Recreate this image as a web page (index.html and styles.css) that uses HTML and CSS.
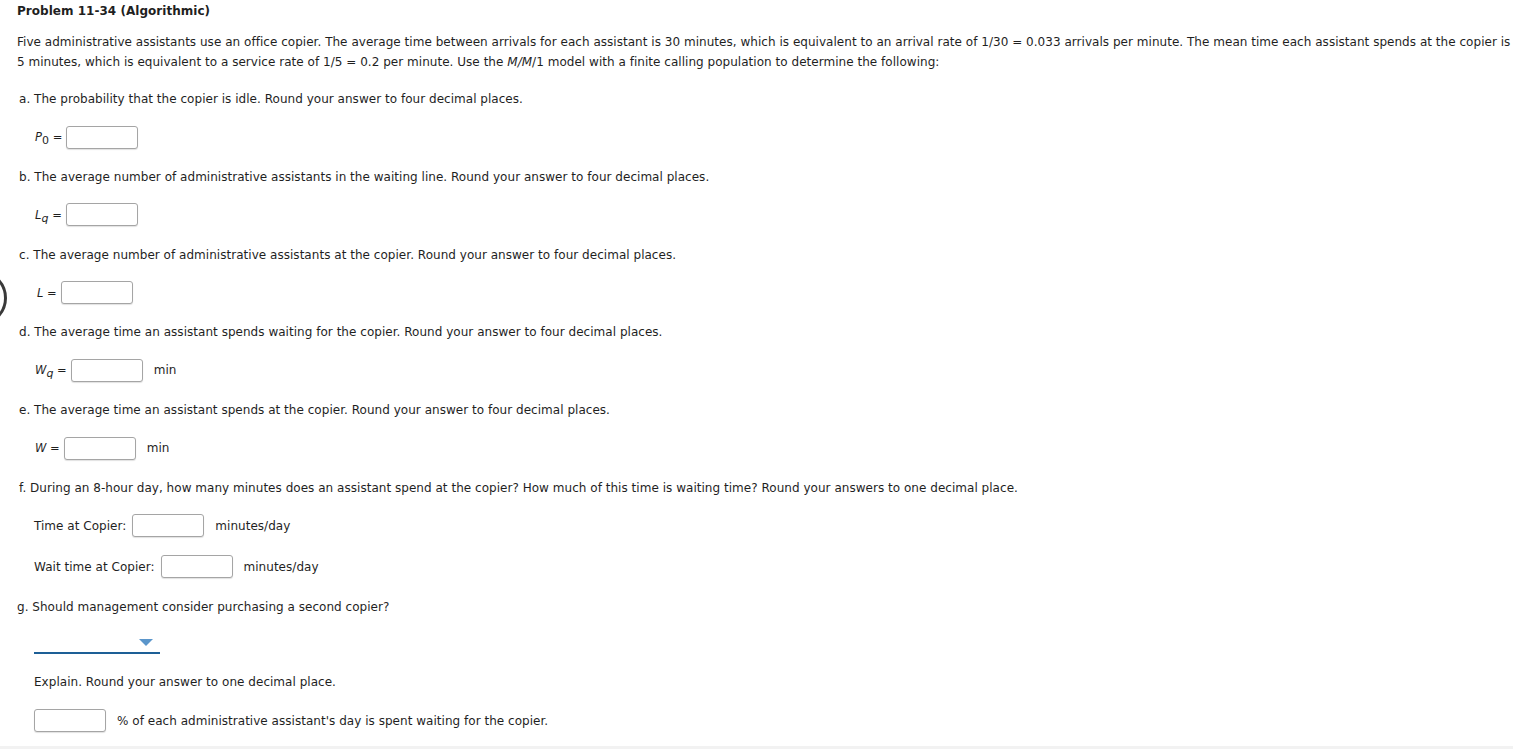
FILE: index.html
```html
<!DOCTYPE html>
<html>
<head>
<meta charset="utf-8">
<link rel="stylesheet" href="styles.css">
</head>
<body>
<div class="circle"></div>
<div class="page">
  <h1 class="title">Problem 11-34 (Algorithmic)</h1>
  <p class="intro">Five administrative assistants use an office copier. The average time between arrivals for each assistant is 30 minutes, which is equivalent to an arrival rate of 1/30 = 0.033 arrivals per minute. The mean time each assistant spends at the copier is 5 minutes, which is equivalent to a service rate of 1/5 = 0.2 per minute. Use the <span class="it">M/M</span>/1 model with a finite calling population to determine the following:</p>

  <div class="q">a. The probability that the copier is idle. Round your answer to four decimal places.</div>
  <div class="row"><span class="lbl"><i>P</i><sub>0</sub> =</span><input class="box" type="text"></div>

  <div class="q">b. The average number of administrative assistants in the waiting line. Round your answer to four decimal places.</div>
  <div class="row"><span class="lbl"><i>L</i><sub><i>q</i></sub> =</span><input class="box" type="text"></div>

  <div class="q">c. The average number of administrative assistants at the copier. Round your answer to four decimal places.</div>
  <div class="row"><span class="lbl lbl-l"><i>L</i> =</span><input class="box" type="text"></div>

  <div class="q">d. The average time an assistant spends waiting for the copier. Round your answer to four decimal places.</div>
  <div class="row"><span class="lbl"><i>W</i><sub><i>q</i></sub> =</span><input class="box" type="text"><span class="unit">min</span></div>

  <div class="q">e. The average time an assistant spends at the copier. Round your answer to four decimal places.</div>
  <div class="row"><span class="lbl"><i>W</i> =</span><input class="box" type="text"><span class="unit">min</span></div>

  <div class="q">f. During an 8-hour day, how many minutes does an assistant spend at the copier? How much of this time is waiting time? Round your answers to one decimal place.</div>
  <div class="row row-text"><span class="txt">Time at Copier:</span><input class="box" type="text"><span class="unit">minutes/day</span></div>
  <div class="row row-text row-tight"><span class="txt">Wait time at Copier:</span><input class="box" type="text"><span class="unit">minutes/day</span></div>

  <div class="q q-g">g. Should management consider purchasing a second copier?</div>
  <div class="select"><span class="arrow"></span></div>
  <div class="q q-sub">Explain. Round your answer to one decimal place.</div>
  <div class="row row-last"><input class="box" type="text"><span class="unit">% of each administrative assistant's day is spent waiting for the copier.</span></div>
</div>
<div class="footer"></div>
</body>
</html>
```

FILE: styles.css
```css
html, body {
  margin: 0;
  padding: 0;
  background: #fff;
}
body {
  font-family: "DejaVu Sans", Verdana, sans-serif;
  font-size: 12px;
  letter-spacing: 0.03px;
  color: #1f1f1f;
  position: relative;
  height: 749px;
  overflow: hidden;
}
.page {
  padding: 0 0 0 17px;
}
.title {
  margin: 0;
  font-size: 12px;
  font-weight: bold;
  line-height: 20px;
  padding-top: 1px;
}
.intro {
  margin: 11px 0 0 0;
  line-height: 20px;
}
.it {
  font-style: italic;
}
.q {
  margin: 17px 0 0 2px;
  line-height: 20px;
}
.row + .q {
  margin-top: 18.8px;
}
.row {
  display: flex;
  align-items: center;
  height: 22px;
  margin-top: 17px;
  padding-left: 16px;
}
.lbl {
  font-size: 11.5px;
  margin-right: 4px;
  padding-left: 2px;
  white-space: nowrap;
}
.lbl-l {
  padding-left: 4px;
}
.lbl sub {
  font-size: 11px;
  vertical-align: -3px;
  line-height: 0;
}
.box {
  box-sizing: border-box;
  width: 72px;
  height: 23px;
  border: 1px solid #a5a5a5;
  border-radius: 3px;
  background: #fff;
  box-shadow: 0 1px 1px rgba(0,0,0,0.12);
  padding: 0;
  margin: 0;
  flex: none;
}
.unit {
  margin-left: 11px;
}
.row-text {
  padding-left: 17px;
}
.txt {
  margin-right: 6px;
}
.row-tight {
  margin-top: 19px;
}
.q-g {
  margin-left: 0;
  margin-top: 18px;
}
.select {
  position: relative;
  margin: 17px 0 0 17px;
  width: 126px;
  height: 20px;
  box-sizing: border-box;
  border-bottom: 2px solid #1d5f96;
}
.arrow {
  position: absolute;
  right: 7px;
  top: 5px;
  width: 0;
  height: 0;
  border-left: 7px solid transparent;
  border-right: 7px solid transparent;
  border-top: 7px solid #5b96cb;
}
.q-sub {
  margin: 18px 0 0 17px;
}
.row-last {
  padding-left: 17px;
  margin-top: 18px;
}
.circle {
  position: absolute;
  left: -49px;
  top: 270px;
  width: 56px;
  height: 56px;
  box-sizing: border-box;
  border: 3px solid #3a3a3a;
  border-radius: 50%;
}
.footer {
  position: absolute;
  left: 0;
  right: 0;
  top: 746px;
  height: 3px;
  background: #f2f2f2;
}
```
